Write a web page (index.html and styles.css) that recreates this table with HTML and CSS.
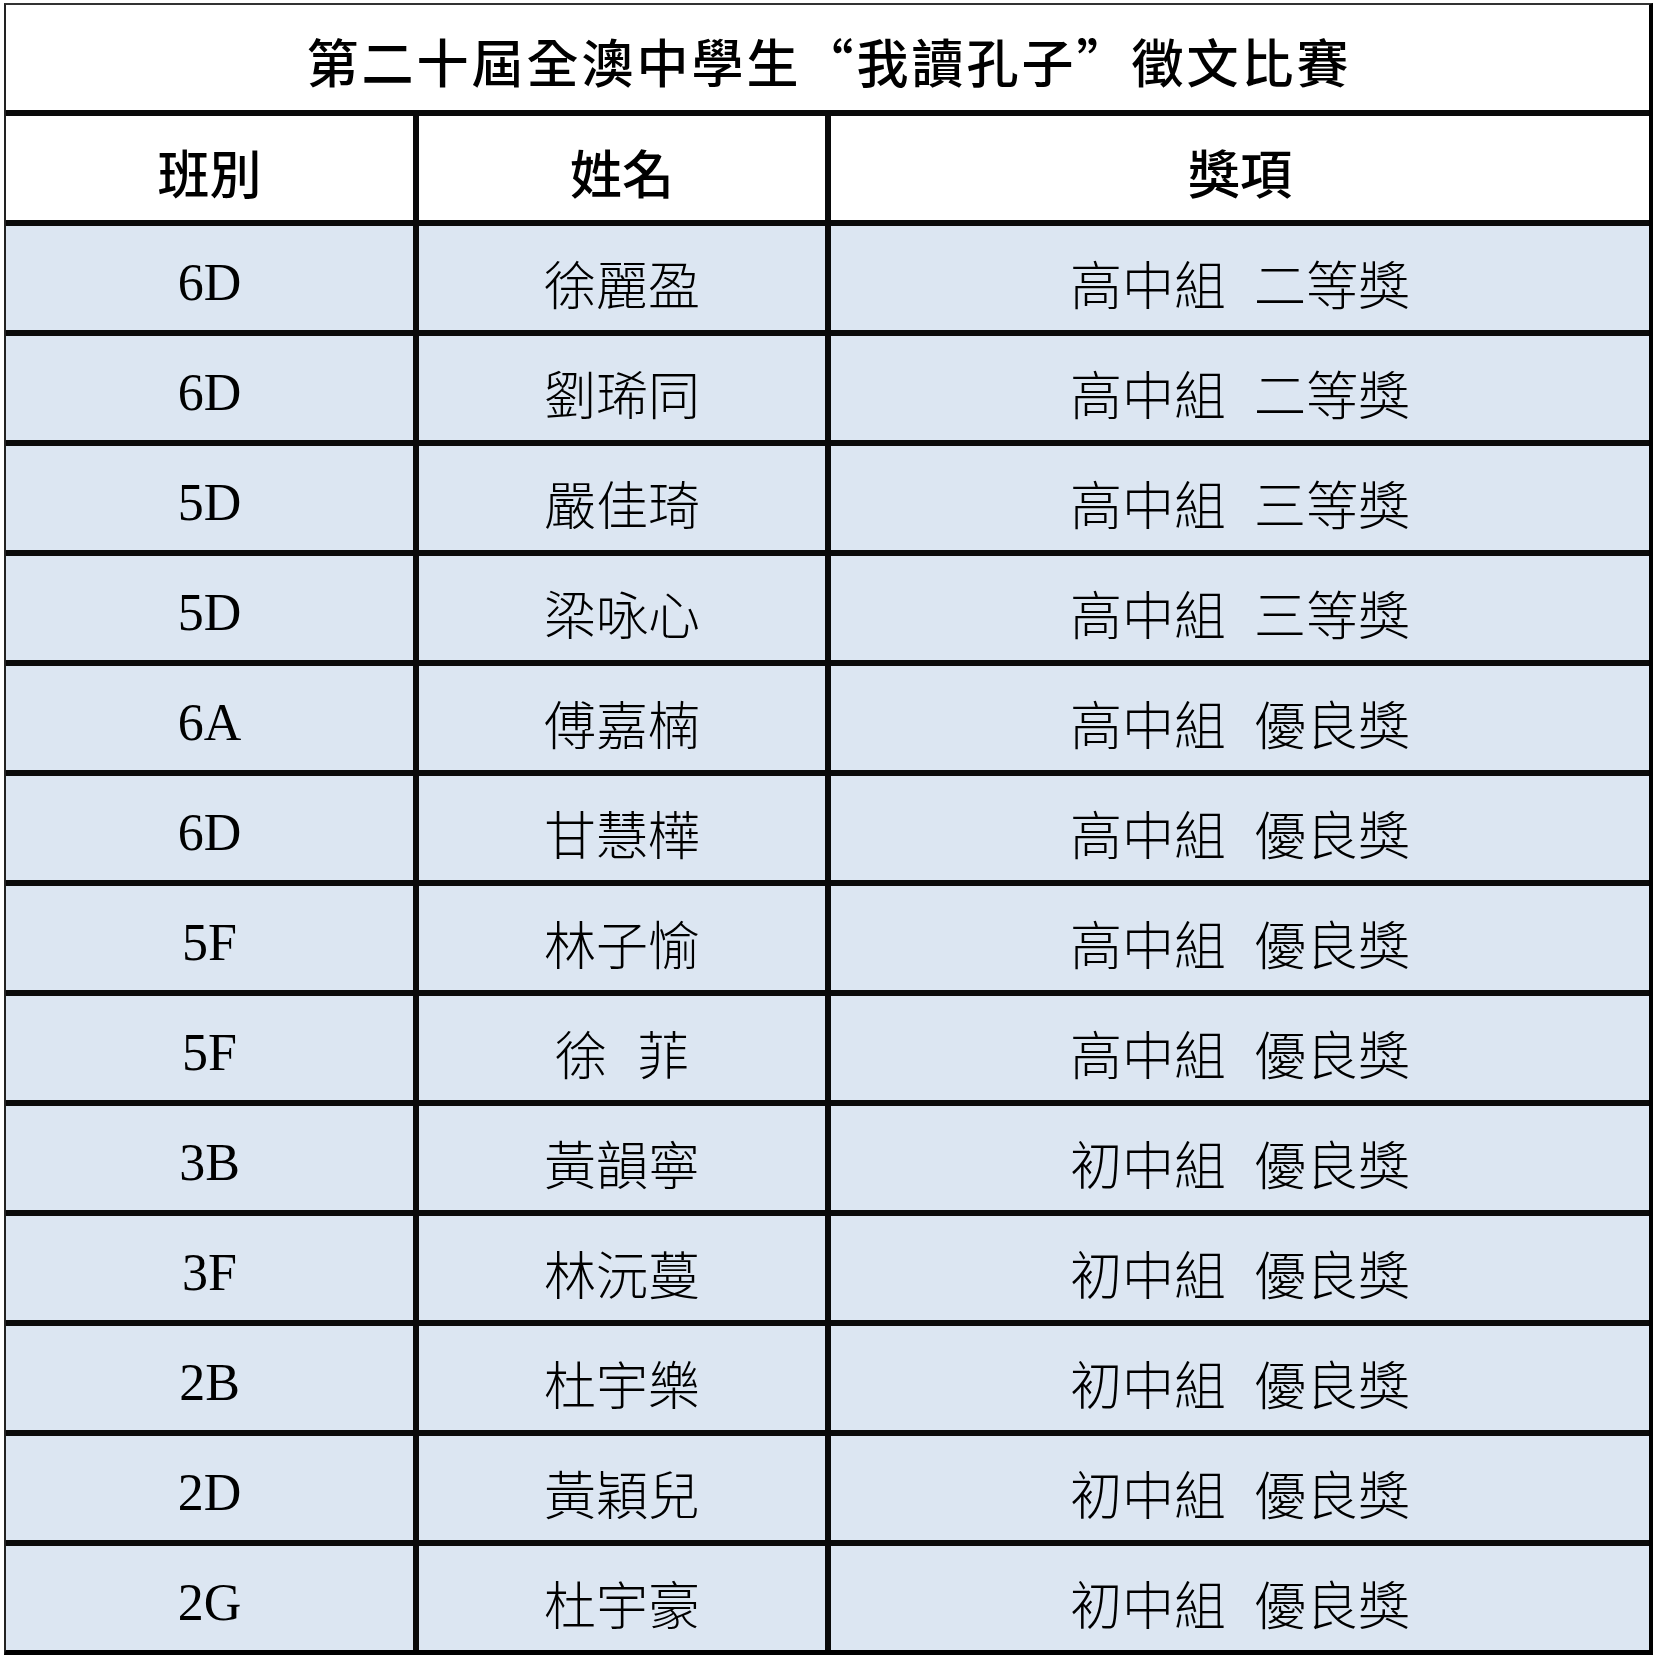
FILE: index.html
```html
<!DOCTYPE html>
<html lang="zh-Hant">
<head>
<meta charset="utf-8">
<link rel="stylesheet" href="styles.css">
</head>
<body>
<div class="sheet">
  <div class="grid">
    <div class="title">第二十屆全澳中學生“我讀孔子”徵文比賽</div>
    <div class="head">班別</div>
    <div class="head">姓名</div>
    <div class="head">獎項</div>

    <div class="cell">6D</div><div class="cell">徐麗盈</div><div class="cell">高中組<span class="sp"></span>二等獎</div>
    <div class="cell">6D</div><div class="cell">劉琋同</div><div class="cell">高中組<span class="sp"></span>二等獎</div>
    <div class="cell">5D</div><div class="cell">嚴佳琦</div><div class="cell">高中組<span class="sp"></span>三等獎</div>
    <div class="cell">5D</div><div class="cell">梁咏心</div><div class="cell">高中組<span class="sp"></span>三等獎</div>
    <div class="cell">6A</div><div class="cell">傅嘉楠</div><div class="cell">高中組<span class="sp"></span>優良獎</div>
    <div class="cell">6D</div><div class="cell">甘慧樺</div><div class="cell">高中組<span class="sp"></span>優良獎</div>
    <div class="cell">5F</div><div class="cell">林子愉</div><div class="cell">高中組<span class="sp"></span>優良獎</div>
    <div class="cell">5F</div><div class="cell">徐<span class="sp2"></span>菲</div><div class="cell">高中組<span class="sp"></span>優良獎</div>
    <div class="cell">3B</div><div class="cell">黃韻寧</div><div class="cell">初中組<span class="sp"></span>優良獎</div>
    <div class="cell">3F</div><div class="cell">林沅蔓</div><div class="cell">初中組<span class="sp"></span>優良獎</div>
    <div class="cell">2B</div><div class="cell">杜宇樂</div><div class="cell">初中組<span class="sp"></span>優良獎</div>
    <div class="cell">2D</div><div class="cell">黃穎兒</div><div class="cell">初中組<span class="sp"></span>優良獎</div>
    <div class="cell">2G</div><div class="cell">杜宇豪</div><div class="cell">初中組<span class="sp"></span>優良獎</div>
  </div>
</div>
</body>
</html>
```

FILE: styles.css
```css
html, body {
  margin: 0;
  padding: 0;
  background: #ffffff;
}
body {
  padding: 3px 0 0 4px;
}
.sheet {
  width: 1643px;
  border-left: 2px solid #222;
  border-top: 2px solid #333;
  border-right: 4px solid #000;
  border-bottom: 5px solid #000;
  background: #000;
}
.grid {
  display: grid;
  grid-template-columns: 407px 406px 818px;
  grid-template-rows: 105px repeat(14, 104px);
  gap: 6px;
  background: #0a0a0a;
  font-family: "Liberation Serif", "Noto Sans CJK TC", serif;
  color: #000;
}
.title {
  grid-column: 1 / -1;
  background: #fff;
  display: flex;
  align-items: center;
  justify-content: center;
  font-family: "Noto Sans CJK TC", sans-serif;
  font-size: 52px;
  font-weight: 500;
  letter-spacing: 3px;
  padding: 6px 0 0 3px;
  box-sizing: border-box;
}
.head {
  background: #fff;
  display: flex;
  align-items: center;
  justify-content: center;
  font-family: "Noto Sans CJK TC", sans-serif;
  font-size: 52px;
  font-weight: 500;
  padding-top: 6px;
  box-sizing: border-box;
}
.cell {
  background: #dce6f2;
  display: flex;
  align-items: center;
  justify-content: center;
  font-size: 52px;
  font-weight: 300;
  padding-top: 8px;
  box-sizing: border-box;
  white-space: pre;
}
.sp {
  display: inline-block;
  width: 28px;
}
.sp2 {
  display: inline-block;
  width: 30px;
}
```
